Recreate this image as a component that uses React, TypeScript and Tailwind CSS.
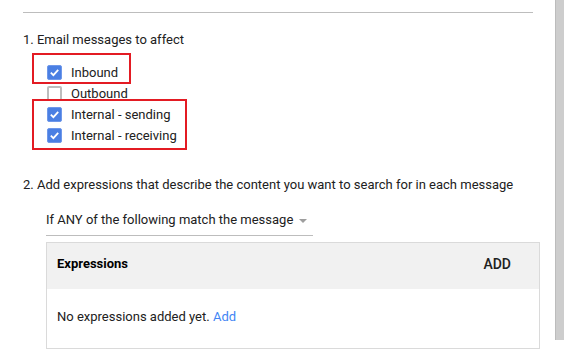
const OPTIONS = [
  { label: 'Inbound', checked: true },
  { label: 'Outbound', checked: false },
  { label: 'Internal - sending', checked: true },
  { label: 'Internal - receiving', checked: true },
]

function Checkbox({ checked }: { checked: boolean }) {
  if (!checked) {
    return <span className="w-[15px] h-[15px] rounded-[2px] border-2 border-[#bdbdbd] bg-white shrink-0" />
  }
  return (
    <span className="w-[15px] h-[15px] rounded-[2px] bg-[#4a7fe3] border border-[#6f98ea] shrink-0 flex items-center justify-center">
      <svg width="11" height="11" viewBox="0 0 11 11" fill="none">
        <path d="M1.8 5.6 L4.4 8.1 L9.2 2.9" stroke="white" strokeWidth="1.8" />
      </svg>
    </span>
  )
}

export default function App() {
  return (
    <div
      className="relative w-[572px] h-[357px] bg-white overflow-hidden flex text-[13px] text-[#212121]"
      style={{ fontFamily: "Roboto, 'Liberation Sans', sans-serif" }}
    >
      <div className="w-[555px] pt-[12px]">
        <div className="ml-[23px] w-[510px] h-px bg-[#bdbdbd]" />

        <div className="ml-[23px] mt-[17px] leading-[20px]">1. Email messages to affect</div>

        <div className="ml-[47px] mt-[12px] flex flex-col">
          {OPTIONS.map((opt) => (
            <div key={opt.label} className="h-[21px] flex items-center gap-[9px]">
              <Checkbox checked={opt.checked} />
              <span className="leading-[20px]">{opt.label}</span>
            </div>
          ))}
        </div>

        <div className="ml-[23px] mt-[29px] leading-[20px]">
          2. Add expressions that describe the content you want to search for in each message
        </div>

        <div className="ml-[46px] mt-[15px] w-[267px] border-b border-[#bdbdbd] pb-[5px] flex items-center">
          <span className="leading-[20px]">If ANY of the following match the message</span>
          <svg className="ml-[6px] mt-[1px]" width="8" height="4" viewBox="0 0 8 4">
            <path d="M0 0 L8 0 L4 4 Z" fill="#9e9e9e" />
          </svg>
        </div>

        <div className="ml-[46px] mt-[6px] w-[494px] border border-[#dadada]">
          <div className="h-[46px] bg-[#f1f1f1] flex items-center justify-between pl-[10px] pr-[28px] pb-[4px]">
            <span className="font-bold text-black leading-[20px]">Expressions</span>
            <span className="font-medium text-[14px] leading-[20px]">ADD</span>
          </div>
          <div className="h-[59px] flex items-center pl-[10px] pb-[4px]">
            <span className="leading-[20px]">
              No expressions added yet. <span className="text-[#4285f4]">Add</span>
            </span>
          </div>
        </div>
      </div>

      <div className="w-[9px] h-[340px] bg-[#cdcdcd] border-l border-[#bcbcbc]" />

      {/* annotation boxes */}
      <div className="absolute left-[32px] top-[53px] w-[99px] h-[31px] border-2 border-[#e31b23]" />
      <div className="absolute left-[32px] top-[99px] w-[155px] h-[51px] border-2 border-[#e31b23]" />
    </div>
  )
}
